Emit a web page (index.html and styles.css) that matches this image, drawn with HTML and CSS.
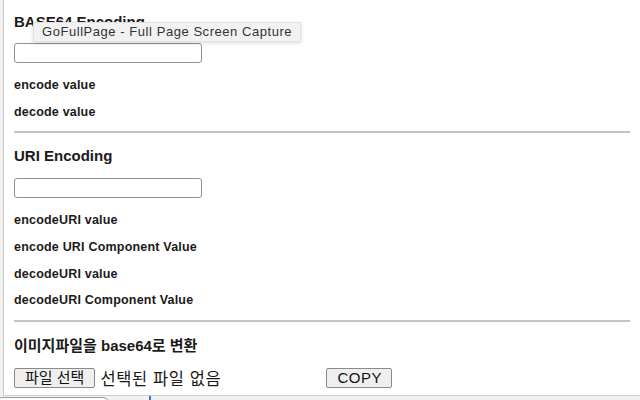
FILE: index.html
```html
<!DOCTYPE html>
<html lang="ko">
  <head>
    <meta charset="UTF-8" />
    <meta name="viewport" content="width=device-width, initial-scale=1.0" />
    <title>Encoding Tools</title>
    <link rel="stylesheet" href="styles.css">
  </head>
  <body>
    <div class="popup">
      <section class="block first">
        <h3>BASE64 Encoding</h3>
        <input type="text" class="field" />
        <p class="result">encode value</p>
        <p class="result">decode value</p>
      </section>
      <hr />
      <section class="block">
        <h3>URI Encoding</h3>
        <input type="text" class="field" />
        <p class="result">encodeURI value</p>
        <p class="result">encode URI Component Value</p>
        <p class="result">decodeURI value</p>
        <p class="result">decodeURI Component Value</p>
      </section>
      <hr />
      <section class="block">
        <h3 class="image-title">이미지파일을 base64로 변환</h3>
        <div class="file-row">
          <span class="btn">파일 선택</span>
          <span class="file-name">선택된 파일 없음</span>
          <button class="btn copy">COPY</button>
        </div>
      </section>

      <div class="tooltip">GoFullPage - Full Page Screen Capture</div>
    </div>
    <div class="page-below">
      <div class="tab"></div>
      <div class="tick"></div>
    </div>
  </body>
</html>
```

FILE: styles.css
```css
/* Page behind the popup */
body {
  margin: 0;
  background: #f1f1f1;
  font-family: "Liberation Sans", Arial, "Noto Sans CJK KR", sans-serif;
  color: #1a1a1a;
  overflow: hidden;
}

.popup {
  position: relative;
  margin-left: 3px;
  height: 396px;
  box-sizing: border-box;
  padding: 0 10px;
  background: white;
  border-left: 1px solid #c9c9c9;
  border-bottom: 1px solid #d0d0d0;
}

/* Sections */
.block {
  padding-top: 14px;
}

.block.first {
  padding-top: 13px;
}

.block h3 {
  margin: 0 0 13px;
  font-size: 15px;
  line-height: 18px;
  font-weight: bold;
}

.block.first h3 {
  margin-bottom: 12px;
}

.block h3.image-title {
  margin-top: 1px;
  margin-bottom: 11px;
}

.field {
  display: block;
  width: 188px;
  height: 20px;
  box-sizing: border-box;
  border: 1px solid #8f8f8f;
  border-radius: 3px;
  margin: 0 0 15px;
}

.result {
  margin: 0 0 11.7px;
  font-size: 12.5px;
  font-weight: bold;
  letter-spacing: 0.2px;
  line-height: 15px;
}

hr {
  border: none;
  border-top: 2px solid #c4c4c4;
  margin: 3px 0 0;
}

/* File row */
.file-row {
  display: flex;
  align-items: center;
}

.btn {
  display: inline-block;
  background: #efefef;
  border: 1px solid #8a8a8a;
  border-radius: 2px;
  padding: 0 10px;
  height: 20px;
  box-sizing: border-box;
  line-height: 18px;
  font-family: inherit;
  font-size: 15px;
  color: #111;
}

.file-name {
  margin-left: 5px;
  width: 226px;
  font-size: 16.5px;
  letter-spacing: 0.6px;
}

.copy {
  padding: 0 10px;
  width: 66px;
  letter-spacing: 0.5px;
}

/* Browser tooltip over the heading */
.tooltip {
  position: absolute;
  left: 29px;
  top: 22px;
  padding: 1px 8px;
  line-height: 16px;
  background: #f2f2f2;
  border: 1px solid #e2e2e2;
  box-shadow: 0 1px 4px rgba(0, 0, 0, 0.15);
  font-size: 13px;
  color: #333;
  letter-spacing: 0.55px;
}

/* Strip of the page under the popup */
.page-below {
  position: relative;
  height: 4px;
}

.tab {
  position: absolute;
  left: -4px;
  top: 1px;
  width: 111px;
  height: 10px;
  background: white;
  border: 1px solid #9a9a9a;
  border-radius: 6px;
}

.tick {
  position: absolute;
  left: 149px;
  top: 0;
  width: 2px;
  height: 4px;
  background: #3a6fd8;
}
```
